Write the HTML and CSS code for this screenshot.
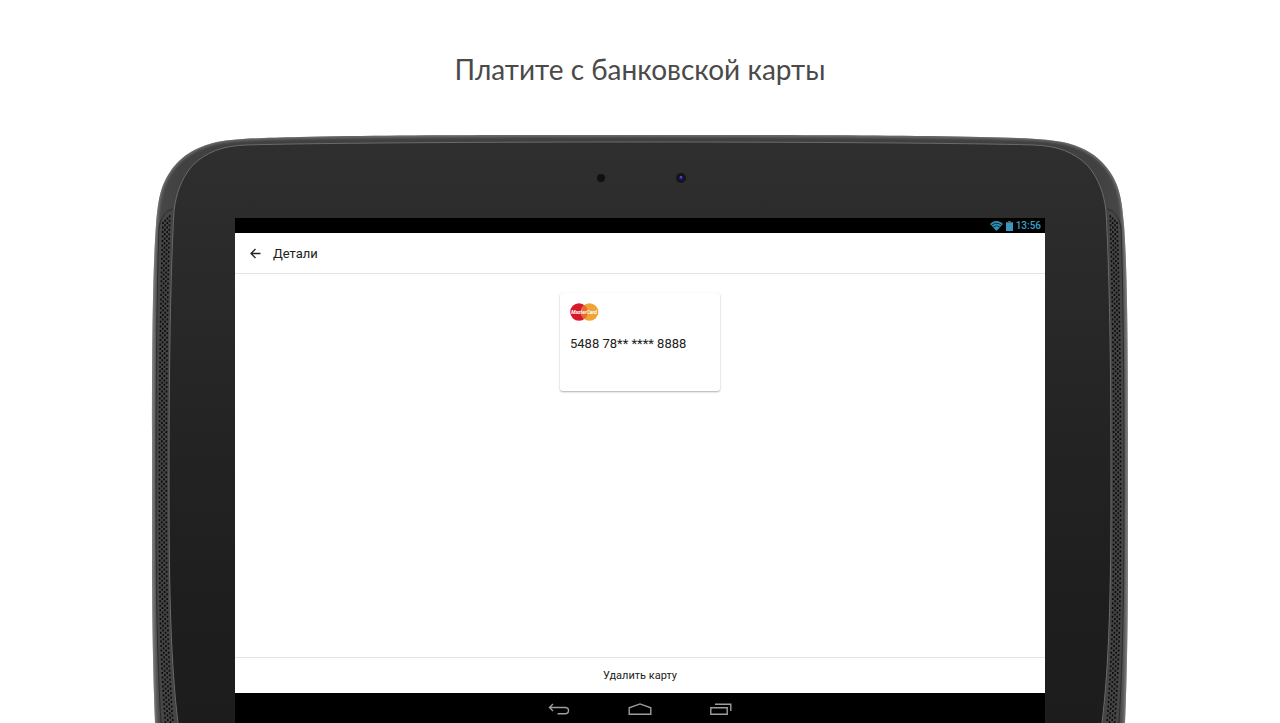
FILE: index.html
```html
<!DOCTYPE html>
<html lang="ru">
<head>
<meta charset="utf-8">
<meta name="viewport" content="width=device-width, initial-scale=1">
<title>Платите с банковской карты</title>
<link rel="stylesheet" href="styles.css">
</head>
<body>
<main class="page">
  <h1 class="headline">Платите с банковской карты</h1>
  <div class="device">
    <svg class="device-frame" viewBox="0 0 980 588" preserveAspectRatio="none" aria-hidden="true">
      <defs>
        <linearGradient id="shell" x1="0" x2="1" y1="0" y2="0">
          <stop offset="0" stop-color="#6c6c6c"/>
          <stop offset=".004" stop-color="#565656"/>
          <stop offset=".009" stop-color="#474747"/>
          <stop offset=".03" stop-color="#414141"/>
          <stop offset=".97" stop-color="#414141"/>
          <stop offset=".991" stop-color="#474747"/>
          <stop offset=".996" stop-color="#565656"/>
          <stop offset="1" stop-color="#6c6c6c"/>
        </linearGradient>
        <linearGradient id="face" x1="0" x2="0" y1="0" y2="1">
          <stop offset="0" stop-color="#2f2f2f"/>
          <stop offset=".2" stop-color="#2a2a2a"/>
          <stop offset=".5" stop-color="#232323"/>
          <stop offset=".75" stop-color="#1e1e1e"/>
          <stop offset="1" stop-color="#1c1c1c"/>
        </linearGradient>
        <filter id="soft" x="-5%" y="-5%" width="110%" height="110%"><feGaussianBlur stdDeviation="1.6"/></filter>
        <path id="outline" d="M490 0C390 0 250 0 150 2C105 3 80 4 63 8C40 14 28 25 20 37C10 52 8 66 6 90C3 130 2 200 2 300V425C2 480 3 540 5 588V620H975V588C977 540 978 480 978 425V300C978 200 977 130 974 90C972 66 970 52 960 37C952 25 940 14 917 8C900 4 875 3 830 2C730 0 590 0 490 0Z"/>
        <clipPath id="outline-clip"><use href="#outline"/></clipPath>
        <g id="speaker">
          <path d="M11 588C7 520 6 460 6 350C6 230 7 150 9 92Q12 76 23 74C20 150 18 200 18 350C18 460 20 530 27 588Z" fill="#454545"/>
          <path d="M11 588C7 520 6 460 6 350C6 230 7 150 9 92Q12 76 23 74" fill="none" stroke="#2c2c2c"/>
          <g fill="none" stroke="#0a0a0a" stroke-width="1.6" stroke-dasharray="2 2.500">
            <path d="M13 87C11 150 9.500 220 9.500 350C9.500 460 10 520 15.500 588"/>
            <path d="M15.250 84.750C13.250 150 11.750 220 11.750 350C11.750 460 12.500 520 18 588"/>
            <path d="M17.500 82.500C15.500 150 14 220 14 350C14 460 15 520 20.500 588"/>
            <path d="M19.750 80.250C17.750 150 16.250 220 16.250 350C16.250 460 17.500 520 23 588"/>
          </g>
        </g>
      </defs>
      <use href="#outline" fill="url(#shell)"/>
      <g clip-path="url(#outline-clip)">
        <use href="#outline" fill="none" stroke="#909090" stroke-width="2" filter="url(#soft)"/>
      </g>
      <path d="M28 588C21 530 19 460 19 350C19 210 21 130 24 76C26 59 31 44 42 31C56 17 72 11 96 10C160 8 350 7 490 7C630 7 820 8 884 10C908 11 924 17 938 31C949 44 954 59 956 76C959 130 961 210 961 350C961 460 959 530 952 588V620H28Z" fill="url(#face)" stroke="#6a6a6a"/>
      <use href="#speaker"/>
      <use href="#speaker" transform="translate(980 0) scale(-1 1)"/>
      <circle cx="451" cy="43" r="4" fill="#101010"/>
      <circle cx="531" cy="43" r="5" fill="#151517"/>
      <circle cx="531" cy="43" r="2" fill="#2b1699"/>
      <circle cx="531" cy="42" r="1" fill="#376ccc"/>
    </svg>
    <section class="screen">
      <div class="status-bar">
        <svg width="13" height="10" viewBox="0 0 13 10" aria-label="Wi-Fi" role="img">
          <path d="M0 3C4-1 9-1 13 3L6.500 10Z" fill="#2f91b5"/>
          <path d="M1.500 4.200Q6.500.3 11.500 4.200M3.200 6.100Q6.500 3.200 9.800 6.100" fill="none" stroke="#061820" stroke-width=".8"/>
        </svg>
        <svg width="7" height="10" viewBox="0 0 7 10" aria-label="Батарея" role="img">
          <path d="M2 0H5V1H7V10H0V1H2Z" fill="#3898bd"/><path d="M2 0H5V1H7V2H0V1H2Z" fill="#575f62"/>
        </svg>
        <time class="clock">13:56</time>
      </div>
      <header class="app-bar">
        <button class="back" type="button" aria-label="Назад">
          <svg width="11" height="11" viewBox="0 0 11 11"><path d="M10.500 5.500H1M5.500 1L1 5.500L5.500 10" fill="none" stroke="#222" stroke-width="1.300"/></svg>
        </button>
        <h2 class="title">Детали</h2>
      </header>
      <div class="content">
        <article class="bank-card">
          <svg class="brand" width="29" height="18" viewBox="0 0 29 18" role="img" aria-label="MasterCard">
            <circle cx="9" cy="9" r="8.800" fill="#d8192d"/>
            <circle cx="19.500" cy="9" r="8.800" fill="#efa437"/>
            <path d="M14.250 1.900A8.800 8.800 0 0 1 14.250 16.100A8.800 8.800 0 0 1 14.250 1.900Z" fill="#e66b2e"/>
            <text class="brand-text" x="14" y="11" text-anchor="middle">MasterCard</text>
          </svg>
          <p class="number">5488 78** **** 8888</p>
        </article>
      </div>
      <button class="delete" type="button">Удалить карту</button>
      <nav class="nav-bar" aria-label="Системная навигация">
        <button type="button" aria-label="Назад"><svg width="22" height="12" viewBox="0 0 22 12"><path d="M5 1L1.500 4.500L5 8M1.500 4.500H17Q20.500 4.500 20.500 7.500Q20.500 10.700 17 10.700H9.500" fill="none" stroke="#9d9d9d" stroke-width="1.400"/></svg></button>
        <button type="button" aria-label="Домой"><svg width="24" height="12" viewBox="0 0 24 12"><path d="M1.200 11.200V4.800L12 .9L22.800 4.800V11.200Z" fill="none" stroke="#9d9d9d" stroke-width="1.400"/></svg></button>
        <button type="button" aria-label="Недавние"><svg width="22" height="12" viewBox="0 0 22 12"><path d="M.8 4.800H17.200V11.200H.8ZM5 1.200H20.800V8" fill="none" stroke="#9d9d9d" stroke-width="1.400"/></svg></button>
      </nav>
    </section>
  </div>
</main>
</body>
</html>
```

FILE: styles.css
```css
* { box-sizing: border-box; }

body {
  margin: 0;
  background: #fff;
  color: #212121;
  font-family: Roboto, "Noto Sans", sans-serif;
}

button {
  border: 0;
  padding: 0;
  background: none;
  color: inherit;
  font: inherit;
}

svg { display: block; }

.page {
  display: flex;
  flex-direction: column;
  align-items: center;
  min-height: 100vh;
}

.headline {
  margin: 0;
  padding: 49px 16px 46px;
  color: #4a4a4a;
  font: 400 28px/40px Lato, "Noto Sans", sans-serif;
  text-align: center;
}

.device {
  position: relative;
  display: flex;
  flex: 1;
  width: 100%;
  max-width: 980px;
  padding: 83px 85px 0;
}

.device-frame {
  position: absolute;
  inset: 0;
  width: 100%;
  height: 100%;
}

.screen {
  position: relative;
  display: flex;
  flex: 1;
  flex-direction: column;
  background: #fff;
}

.status-bar {
  display: flex;
  align-items: center;
  justify-content: flex-end;
  gap: 3px;
  height: 15px;
  padding-right: 4px;
  background: #000;
}

.clock {
  color: #3aa0c6;
  font-size: 10px;
  font-weight: 500;
  line-height: 15px;
}

.app-bar {
  display: flex;
  align-items: center;
  gap: 12px;
  height: 41px;
  padding: 0 15px;
  border-bottom: 1px solid #e4e4e4;
}

.title {
  margin: 0;
  font-size: 13px;
  font-weight: 400;
  line-height: 21px;
}

.content {
  display: flex;
  flex: 1;
  align-items: flex-start;
  justify-content: center;
  padding: 19px 16px;
}

.bank-card {
  width: 160px;
  min-height: 98px;
  padding: 10px;
  border-radius: 3px;
  box-shadow: 0 1px 2px rgba(0, 0, 0, .32);
}

.brand-text {
  fill: #fff;
  font: italic 700 5px Roboto, sans-serif;
}

.number {
  margin: 13px 0 0;
  font-size: 13px;
  line-height: 20px;
  white-space: nowrap;
}

.delete {
  height: 36px;
  border-top: 1px solid #e4e4e4;
  font-size: 11px;
}

.nav-bar {
  display: flex;
  justify-content: center;
  gap: 58px;
  height: 30px;
  padding-top: 2px;
  background: #000;
}
```
